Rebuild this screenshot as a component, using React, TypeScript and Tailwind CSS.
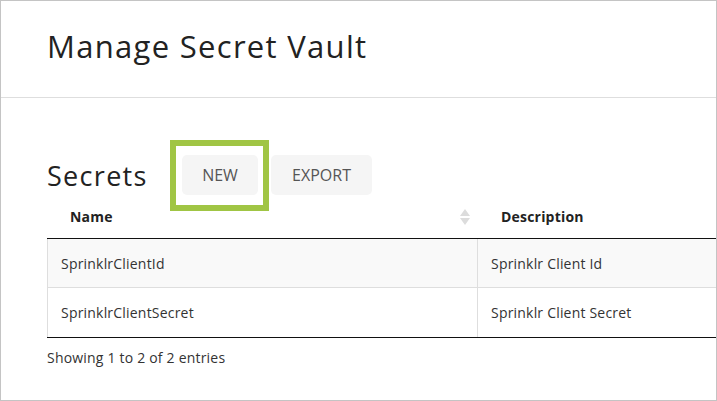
import React from 'react'

const rows = [
  { name: 'SprinklrClientId', description: 'Sprinklr Client Id' },
  { name: 'SprinklrClientSecret', description: 'Sprinklr Client Secret' },
]

function SortIcon() {
  return (
    <svg width="10" height="16" viewBox="0 0 10 16" className="shrink-0">
      <path d="M5 0 L10 7 L0 7 Z" fill="#dcdcdc" />
      <path d="M5 16 L10 9 L0 9 Z" fill="#dcdcdc" />
    </svg>
  )
}

export default function App() {
  return (
    <div
      className="w-[717px] h-[401px] overflow-hidden border border-[#c4c4c4] bg-white text-[#333]"
      style={{ fontFamily: '"Open Sans", "Noto Sans", sans-serif' }}
    >
      {/* ── Page header ── */}
      <div className="flex h-[97px] items-center border-b border-[#dedede] pl-[46px]">
        <h1 className="text-[31px] leading-none font-normal tracking-[1.3px] text-[#222] -mt-[5px]">Manage Secret Vault</h1>
      </div>

      {/* ── Secrets ── */}
      <div className="pl-[46px]">
        <div className="flex items-center pt-[57px]">
          <h2 className="w-[101px] text-[27px] leading-none font-normal tracking-[1.3px] text-[#222] mt-[1px]">Secrets</h2>
          <div className="relative ml-[34px]">
            <button className="flex h-[40px] w-[76px] items-center justify-center rounded-[5px] bg-[#f5f5f5] text-[16px] text-[#555]">
              NEW
            </button>
            {/* highlight box */}
            <div className="pointer-events-none absolute -left-[12px] -top-[15px] h-[71px] w-[99px] border-[6px] border-[#a0c544]" />
          </div>
          <button className="ml-[13px] flex h-[40px] w-[101px] items-center justify-center rounded-[5px] bg-[#f5f5f5] text-[16px] text-[#555]">
            EXPORT
          </button>
        </div>

        {/* ── Table ── */}
        <div className="w-[720px] tracking-[0.2px]">
          <div className="flex h-[44px] items-center border-b border-[#111] text-[14px] font-bold text-[#222]">
            <div className="flex w-[430px] items-center justify-between pl-[23px] pr-[7px]">
              <span>Name</span>
              <SortIcon />
            </div>
            <div className="pl-[24px]">Description</div>
          </div>
          {rows.map((row, i) => (
            <div
              key={row.name}
              className={`flex h-[49px] border-l border-[#dedede] text-[14px] ${i === 0 ? 'bg-[#f9f9f9] border-b' : 'bg-white'}`}
            >
              <div className="flex w-[429px] items-center pl-[13px]">{row.name}</div>
              <div className="flex flex-1 items-center border-l border-[#dedede] pl-[13px]">{row.description}</div>
            </div>
          ))}
          <div className="border-t border-[#111]" />
        </div>

        <div className="pt-[9px] text-[14px] tracking-[0.2px] text-[#333]">Showing 1 to 2 of 2 entries</div>
      </div>
    </div>
  )
}
